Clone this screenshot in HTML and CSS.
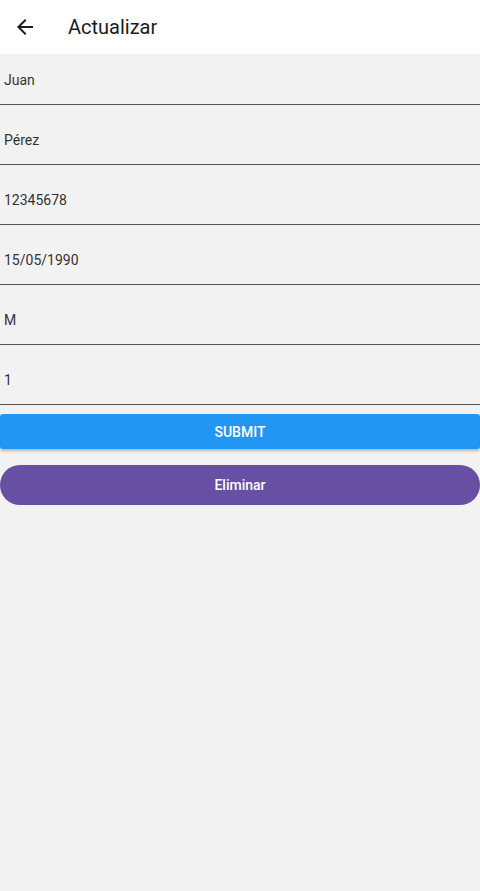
FILE: index.html
```html
<!DOCTYPE html>
<html lang="es">
<head>
<meta charset="utf-8">
<link rel="stylesheet" href="styles.css">
</head>
<body>
<div class="app">
  <header class="topbar">
    <button class="back" aria-label="Atrás">
      <svg width="24" height="24" viewBox="0 0 24 24"><path d="M20 11H7.83l5.59-5.59L12 4l-8 8 8 8 1.41-1.41L7.83 13H20v-2z" fill="#1c1b1f"/></svg>
    </button>
    <h1 class="title">Actualizar</h1>
  </header>
  <main class="form">
    <div class="field first"><span class="value">Juan</span></div>
    <div class="field"><span class="value">Pérez</span></div>
    <div class="field"><span class="value">12345678</span></div>
    <div class="field"><span class="value">15/05/1990</span></div>
    <div class="field"><span class="value">M</span></div>
    <div class="field"><span class="value">1</span></div>
    <button class="submit">SUBMIT</button>
    <button class="delete">Eliminar</button>
  </main>
</div>
</body>
</html>
```

FILE: styles.css
```css
* { box-sizing: border-box; }
html, body { margin: 0; padding: 0; }
body {
  width: 480px;
  height: 891px;
  background: #f2f2f2;
  font-family: Roboto, "Noto Sans", sans-serif;
  overflow: hidden;
}
.app { display: flex; flex-direction: column; height: 100%; }
.topbar {
  height: 54px;
  background: #ffffff;
  display: flex;
  align-items: center;
  position: relative;
  z-index: 1;
}
.back {
  width: 24px;
  height: 24px;
  margin-left: 13px;
  padding: 0;
  border: 0;
  background: none;
  display: flex;
}
.title {
  margin: 0 0 0 31px;
  font-size: 20px;
  font-weight: 400;
  color: #1c1b1f;
}
.form { display: flex; flex-direction: column; }
.field {
  height: 60px;
  border-bottom: 1px solid #555555;
  display: flex;
  align-items: flex-end;
  padding: 0 4px 14px;
}
.field.first { height: 51px; }
.value {
  font-size: 14px;
  line-height: 20px;
  color: #333333;
}
.submit {
  margin-top: 9px;
  height: 35px;
  width: 100%;
  border: 0;
  border-radius: 3px;
  background: #2196f3;
  color: #ffffff;
  font-family: Roboto, sans-serif;
  font-size: 14px;
  font-weight: 500;
  box-shadow: 0 2px 3px rgba(0,0,0,0.25);
}
.delete {
  margin-top: 16px;
  height: 40px;
  width: 100%;
  border: 0;
  border-radius: 20px;
  background: #6750a4;
  color: #ffffff;
  font-family: Roboto, sans-serif;
  font-size: 14px;
  font-weight: 500;
}
```
